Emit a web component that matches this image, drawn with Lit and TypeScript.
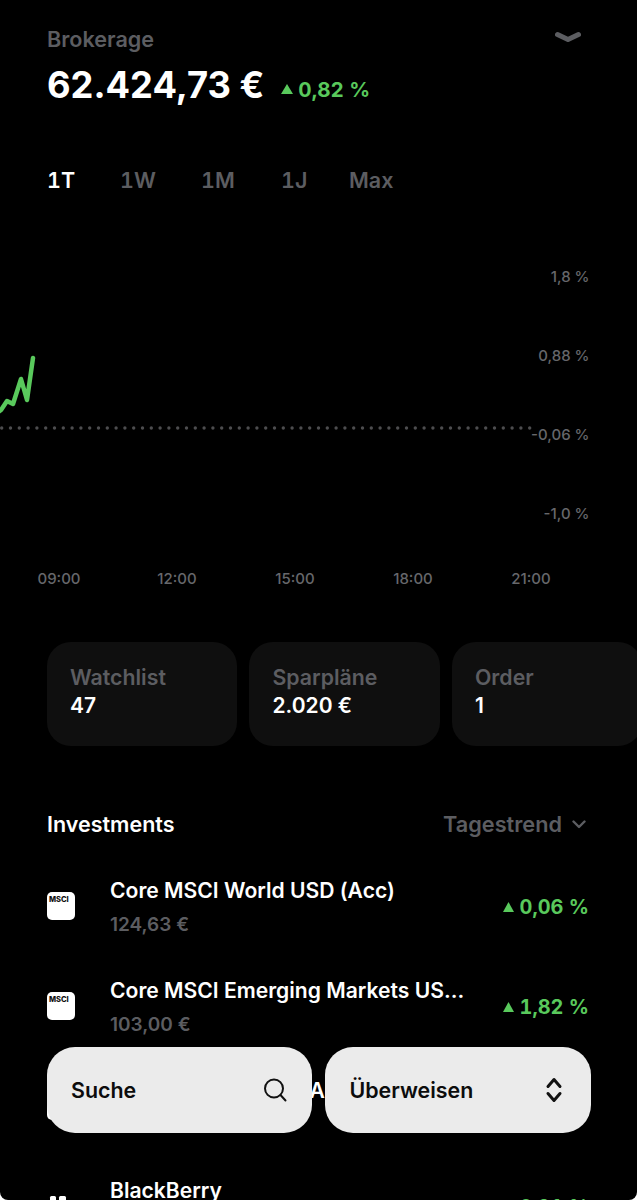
import { LitElement, html, css, svg } from "lit";
import { customElement } from "lit/decorators.js";

const LINE = "-3,413 1,410 7,401 13,404 21,379 27,400 33,358";
const times = ["09:00", "12:00", "15:00", "18:00", "21:00"];
const axis = ["1,8 %", "0,88 %", "-0,06 %", "-1,0 %"];
const tabs = ["1T", "1W", "1M", "1J", "Max"];
const cards = [["Watchlist", "47"], ["Sparpläne", "2.020 €"], ["Order", "1"]];

@customElement("app-root")
export class AppRoot extends LitElement {
  static styles = css`
    :host { display: block; background: #fff; width: 637px; height: 1200px; }
    * { box-sizing: border-box; }
    .screen { position: relative; width: 637px; height: 1200px; overflow: hidden; background: #000; color: #fff; border-radius: 0 0 8px 8px; font-family: Inter, "Liberation Sans", sans-serif; }
    .head { padding: 26px 56px 0 47px; display: flex; justify-content: space-between; align-items: flex-start; }
    .label { font-size: 21.6px; line-height: 26px; font-weight: 600; color: #5c5d61; }
    .chev { margin-top: 4px; display: block; }
    .total { padding: 0 47px; margin-top: 8px; display: flex; align-items: center; gap: 17px; height: 50px; }
    .amount { font-size: 36.3px; line-height: 50px; font-weight: 700; }
    .delta { display: flex; align-items: center; gap: 6px; color: #59c95c; font-weight: 650; font-feature-settings: "tnum"; }
    .delta.big { font-size: 20.6px; gap: 5px; margin-top: 8px; }
    .delta.small { font-size: 19.9px; margin-top: 2px; }
    .tri { display: block; }
    .tabs { display: grid; grid-template-columns: 73px 81px 80px 68px auto; justify-content: start; padding: 0 47px; margin-top: 58px; font-size: 21.5px; line-height: 24px; font-weight: 600; color: #5c5d61; font-feature-settings: "tnum"; }
    .tabs .on { color: #fff; }
    .chart { display: block; }
    .axis { font: 500 15px Inter, "Liberation Sans", sans-serif; fill: #66676b; }
    .cards { display: flex; gap: 12px; padding-left: 46.5px; }
    .card { flex: none; width: 190.5px; height: 104px; border-radius: 24px; background: #0f0f0f; padding: 22px 23.5px; }
    .card .t { font-size: 21.3px; line-height: 26px; font-weight: 600; color: #5c5d61; }
    .card .v { font-size: 21px; line-height: 26px; font-weight: 600; color: #fff; margin-top: 3px; }
    .sec { display: flex; justify-content: space-between; align-items: center; padding: 0 51px 0 47px; margin-top: 64px; height: 28px; }
    .sec .h { font-size: 21.5px; font-weight: 600; }
    .sort { display: flex; align-items: center; gap: 10px; font-size: 21.7px; font-weight: 600; color: #5c5d61; }
    .list { margin-top: 18px; }
    .row { display: flex; align-items: center; height: 100px; padding: 0 48px 0 47px; }
    .logo { flex: none; width: 28px; height: 28px; border-radius: 5px; background: #fff; color: #111; font-size: 7.5px; font-weight: 800; line-height: 9px; padding: 3px 2px; margin-right: 35px; }
    .logo.bb { background: #000; padding: 0; }
    .logo.bb svg { display: block; }
    .info { flex: 1; min-width: 0; padding-top: 2px; }
    .name { font-size: 21.1px; line-height: 26px; font-weight: 600; white-space: nowrap; }
    .price { font-size: 19px; line-height: 24px; font-weight: 600; color: #5c5d61; margin-top: 9px; }
    .dock { position: absolute; left: 46.5px; top: 1047px; display: flex; gap: 13px; }
    .btn { width: 265.5px; height: 86px; border-radius: 28px; background: #ebebeb; color: #0c0c0c; display: flex; align-items: center; justify-content: space-between; padding: 0 24.5px; font-size: 21.4px; font-weight: 600; }
    .btn svg { display: block; }
    .btn .updown { margin-right: 3px; }
  `;

  private tri(w: number, h: number) {
    return html`<svg class="tri" width=${w} height=${h} viewBox="0 0 10 10" preserveAspectRatio="none"><path d="M5 0 10 10H0Z" fill="#59c95c" /></svg>`;
  }

  private row(name: string, price: string, delta: string, bb = false) {
    return html`<div class="row">
      ${bb
        ? html`<div class="logo bb"><svg width="28" height="28" viewBox="0 0 28 28" fill="#fff"><rect x="3" y="4" width="6" height="5" rx="1.5" /><rect x="12" y="4" width="7" height="5" rx="1.5" /><rect x="2" y="12" width="6" height="5" rx="1.5" /><rect x="11" y="12" width="7" height="5" rx="1.5" /><rect x="21" y="8" width="6" height="5" rx="1.5" /><rect x="20" y="16" width="6" height="5" rx="1.5" /><rect x="9" y="20" width="7" height="5" rx="1.5" /></svg></div>`
        : html`<div class="logo">MSCI</div>`}
      <div class="info"><div class="name">${name}</div><div class="price">${price}</div></div>
      <div class="delta small">${this.tri(11, 10)}${delta}</div>
    </div>`;
  }

  render() {
    return html`<div class="screen">
      <div class="head">
        <div class="label">Brokerage</div>
        <svg class="chev" width="26" height="14" viewBox="0 0 26 14"><path d="M2.5 4.5 13 9.5 23.5 4.5" fill="none" stroke="#5c5d61" stroke-width="5" stroke-linecap="round" stroke-linejoin="round" /></svg>
      </div>
      <div class="total">
        <span class="amount">62.424,73 €</span>
        <span class="delta big">${this.tri(12, 10)}0,82 %</span>
      </div>
      <div class="tabs">${tabs.map((t, i) => html`<span class=${i === 0 ? "on" : ""}>${t}</span>`)}</div>
      <svg class="chart" width="637" height="450" viewBox="0 192 637 450">
        <polyline points=${LINE} fill="none" stroke="#59c95c" stroke-width="4.5" stroke-linejoin="round" stroke-linecap="round" />
        <line x1="1.7" y1="428" x2="534" y2="428" stroke="#4d4d4f" stroke-width="3.4" stroke-linecap="round" stroke-dasharray="0 8.8" />
        ${axis.map((a, i) => svg`<text class="axis" x="589.5" y=${282 + i * 79} text-anchor="end">${a}</text>`)}
        ${times.map((t, i) => svg`<text class="axis" x=${59 + i * 118} y="584" text-anchor="middle">${t}</text>`)}
      </svg>
      <div class="cards">${cards.map(([t, v]) => html`<div class="card"><div class="t">${t}</div><div class="v">${v}</div></div>`)}</div>
      <div class="sec"><span class="h">Investments</span>
        <span class="sort">Tagestrend <svg width="14" height="9" viewBox="0 0 14 9"><path d="M1.5 1.5 7 7l5.5-5.5" fill="none" stroke="#5c5d61" stroke-width="2.4" stroke-linecap="round" stroke-linejoin="round" /></svg></span>
      </div>
      <div class="list">
        ${this.row("Core MSCI World USD (Acc)", "124,63 €", "0,06 %")}
        ${this.row("Core MSCI Emerging Markets US...", "103,00 €", "1,82 %")}
        ${this.row("Core S&P 500 ETF (Acc)", "512 €", "0,41 %")}
        ${this.row("BlackBerry", "6 €", "0,91 %", true)}
      </div>
      <div class="dock">
        <div class="btn">Suche <svg width="26" height="26" viewBox="0 0 26 26"><circle cx="12" cy="11.5" r="9" fill="none" stroke="#111" stroke-width="2" /><path d="M18.5 18 23.5 23.5" stroke="#111" stroke-width="2" stroke-linecap="round" /></svg></div>
        <div class="btn">Überweisen <svg class="updown" width="18" height="26" viewBox="0 0 18 26"><path d="M3 9.5 9 2.5l6 7M3 16.5l6 7 6-7" fill="none" stroke="#111" stroke-width="3" stroke-linecap="round" stroke-linejoin="round" /></svg></div>
      </div>
    </div>`;
  }
}
